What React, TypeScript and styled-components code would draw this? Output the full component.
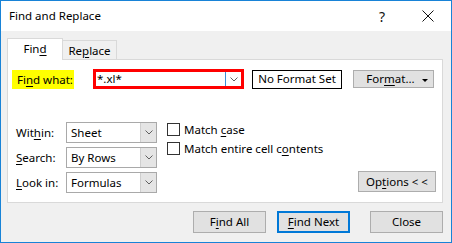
import React from 'react';
import styled, { createGlobalStyle } from 'styled-components';

const GlobalStyle = createGlobalStyle`
  html, body { margin: 0; padding: 0; background: #fff; }
  body { font-family: "Noto Sans", "Liberation Sans", sans-serif; font-size: 11.5px; color: #000; }
  * { box-sizing: border-box; }
`;

const Window = styled.div`
  width: 452px;
  height: 243px;
  border: 1px solid #1883d7;
  display: flex;
  flex-direction: column;
  background: #f0f0f0;
  overflow: hidden;
`;

const TitleBar = styled.div`
  height: 30px;
  background: #fff;
  display: flex;
  align-items: center;
  padding-left: 8px;
`;

const Title = styled.div`
  flex: 1;
  font-size: 11.5px;
  padding-bottom: 2px;
`;

const TitleButton = styled.div`
  width: 46px;
  height: 30px;
  display: flex;
  align-items: center;
  justify-content: center;
  font-size: 14px;
  color: #111;
`;

const Body = styled.div`
  flex: 1;
  padding: 7px 8px 0 6px;
  display: flex;
  flex-direction: column;
`;

const TabStrip = styled.div`
  display: flex;
  height: 21px;
  align-items: flex-start;
  position: relative;
  z-index: 1;
`;

const Tab = styled.div<{ $active?: boolean }>`
  display: flex;
  align-items: center;
  justify-content: center;
  border: 1px solid #d9d9d9;
  border-bottom: none;
  background: ${p => (p.$active ? '#fff' : '#f0f0f0')};
  width: ${p => (p.$active ? '56px' : '55px')};
  height: ${p => (p.$active ? '22px' : '19px')};
  margin-top: ${p => (p.$active ? '0' : '2px')};
  margin-left: ${p => (p.$active ? '0' : '-1px')};
  padding-bottom: ${p => (p.$active ? '3px' : '0')};
`;

const Panel = styled.div`
  width: 436px;
  height: 144px;
  border: 1px solid #d9d9d9;
  background: #fff;
  padding: 9px 6px 0 4px;
  display: flex;
  flex-direction: column;
`;

const FindRow = styled.div`
  display: flex;
  align-items: center;
  height: 20px;
`;

const Highlight = styled.div`
  width: 62px;
  height: 19px;
  background: #ffff00;
  display: flex;
  align-items: center;
  padding-left: 5px;
  margin-right: 19px;
`;

const Combo = styled.div<{ $w: number; $h: number; $red?: boolean }>`
  width: ${p => p.$w}px;
  height: ${p => p.$h}px;
  border: ${p => (p.$red ? '3px solid #ff0000' : '1px solid #a9a9a9')};
  background: #fff;
  display: flex;
  align-items: stretch;
`;

const ComboText = styled.div<{ $pad: number }>`
  flex: 1;
  display: flex;
  align-items: center;
  padding-left: ${p => p.$pad}px;
  padding-bottom: 1px;
`;

const ComboArrow = styled.div<{ $gray?: boolean }>`
  width: 16px;
  display: flex;
  align-items: center;
  justify-content: center;
  background: ${p => (p.$gray ? '#e5e5e5' : '#fff')};
  border-left: 1px solid ${p => (p.$gray ? '#cfcfcf' : '#3c8fd8')};
`;

const FormatBox = styled.div`
  width: 90px;
  height: 19px;
  margin-left: 8px;
  border: 1px solid #000;
  display: flex;
  align-items: center;
  justify-content: center;
  padding-bottom: 1px;
`;

const Button = styled.div<{ $w: number; $h: number; $default?: boolean; $gap?: number }>`
  width: ${p => p.$w}px;
  height: ${p => p.$h}px;
  margin-left: ${p => p.$gap ?? 0}px;
  background: #e1e1e1;
  border: ${p => (p.$default ? '2px solid #0078d7' : '1px solid #adadad')};
  display: flex;
  align-items: center;
  justify-content: center;
  padding-bottom: 1px;
  position: relative;
`;

const FormatButton = styled(Button)`
  padding-right: 6px;
`;

const Caret = styled.span`
  position: absolute;
  right: 5px;
  top: 8px;
  width: 0;
  height: 0;
  border-left: 3px solid transparent;
  border-right: 3px solid transparent;
  border-top: 3px solid #000;
`;

const Lower = styled.div`
  display: flex;
  margin-top: 33px;
  padding-left: 4px;
`;

const Fields = styled.div`
  display: flex;
  flex-direction: column;
  gap: 4px;
`;

const FieldRow = styled.div`
  display: flex;
  align-items: center;
`;

const FieldLabel = styled.div`
  width: 50px;
  padding-bottom: 1px;
`;

const Checks = styled.div`
  display: flex;
  flex-direction: column;
  gap: 6px;
  margin-left: 10px;
  padding-top: 1px;
`;

const CheckRow = styled.label`
  display: flex;
  align-items: center;
  height: 13px;
`;

const Box = styled.span`
  width: 13px;
  height: 13px;
  border: 1px solid #333;
  background: #fff;
  margin-right: 4px;
`;

const Text = styled.span`
  white-space: pre;
`;

const OptionsWrap = styled.div`
  flex: 1;
  display: flex;
  justify-content: flex-end;
  align-items: flex-end;
  padding-bottom: 1px;
`;

const ButtonRow = styled.div`
  display: flex;
  justify-content: flex-end;
  margin-top: 8px;
`;

const U = styled.span`
  text-decoration: underline;
  text-underline-offset: 2px;
`;

const Chevron = () => (
  <svg width="8" height="5" viewBox="0 0 8 5">
    <polyline points="0.5,0.5 4,4 7.5,0.5" fill="none" stroke="#606060" strokeWidth="1" />
  </svg>
);

const fields = [
  { label: <>Wit<U>h</U>in:</>, value: 'Sheet' },
  { label: <><U>S</U>earch:</>, value: 'By Rows' },
  { label: <><U>L</U>ook in:</>, value: 'Formulas' },
];

export default function App() {
  return (
    <>
      <GlobalStyle />
      <Window>
        <TitleBar>
          <Title>Find and Replace</Title>
          <TitleButton>?</TitleButton>
          <TitleButton>
            <svg width="12" height="12" viewBox="0 0 12 12">
              <path d="M0.5 0.5 L11.5 11.5 M11.5 0.5 L0.5 11.5" stroke="#111" strokeWidth="1" />
            </svg>
          </TitleButton>
        </TitleBar>
        <Body>
          <TabStrip>
            <Tab $active><Text>Fin<U>d</U></Text></Tab>
            <Tab><Text>Re<U>p</U>lace</Text></Tab>
          </TabStrip>
          <Panel>
            <FindRow>
              <Highlight><Text>Fi<U>n</U>d what:</Text></Highlight>
              <Combo $w={151} $h={20} $red>
                <ComboText $pad={1}>*.xl*</ComboText>
                <ComboArrow><Chevron /></ComboArrow>
              </Combo>
              <FormatBox>No Format Set</FormatBox>
              <FormatButton $w={81} $h={18} $gap={11}>
                <Text>For<U>m</U>at...</Text>
                <Caret />
              </FormatButton>
            </FindRow>
            <Lower>
              <Fields>
                {fields.map((f, i) => (
                  <FieldRow key={i}>
                    <FieldLabel><Text>{f.label}</Text></FieldLabel>
                    <Combo $w={91} $h={21}>
                      <ComboText $pad={4}>{f.value}</ComboText>
                      <ComboArrow $gray><Chevron /></ComboArrow>
                    </Combo>
                  </FieldRow>
                ))}
              </Fields>
              <Checks>
                <CheckRow><Box /><Text>Match <U>c</U>ase</Text></CheckRow>
                <CheckRow><Box /><Text>Match entire cell c<U>o</U>ntents</Text></CheckRow>
              </Checks>
              <OptionsWrap>
                <Button $w={78} $h={21}><Text>Op<U>t</U>ions &lt; &lt;</Text></Button>
              </OptionsWrap>
            </Lower>
          </Panel>
          <ButtonRow>
            <Button $w={73} $h={22}><Text>F<U>i</U>nd All</Text></Button>
            <Button $w={73} $h={22} $gap={11} $default><Text><U>F</U>ind Next</Text></Button>
            <Button $w={73} $h={22} $gap={20}>Close</Button>
          </ButtonRow>
        </Body>
      </Window>
    </>
  );
}
